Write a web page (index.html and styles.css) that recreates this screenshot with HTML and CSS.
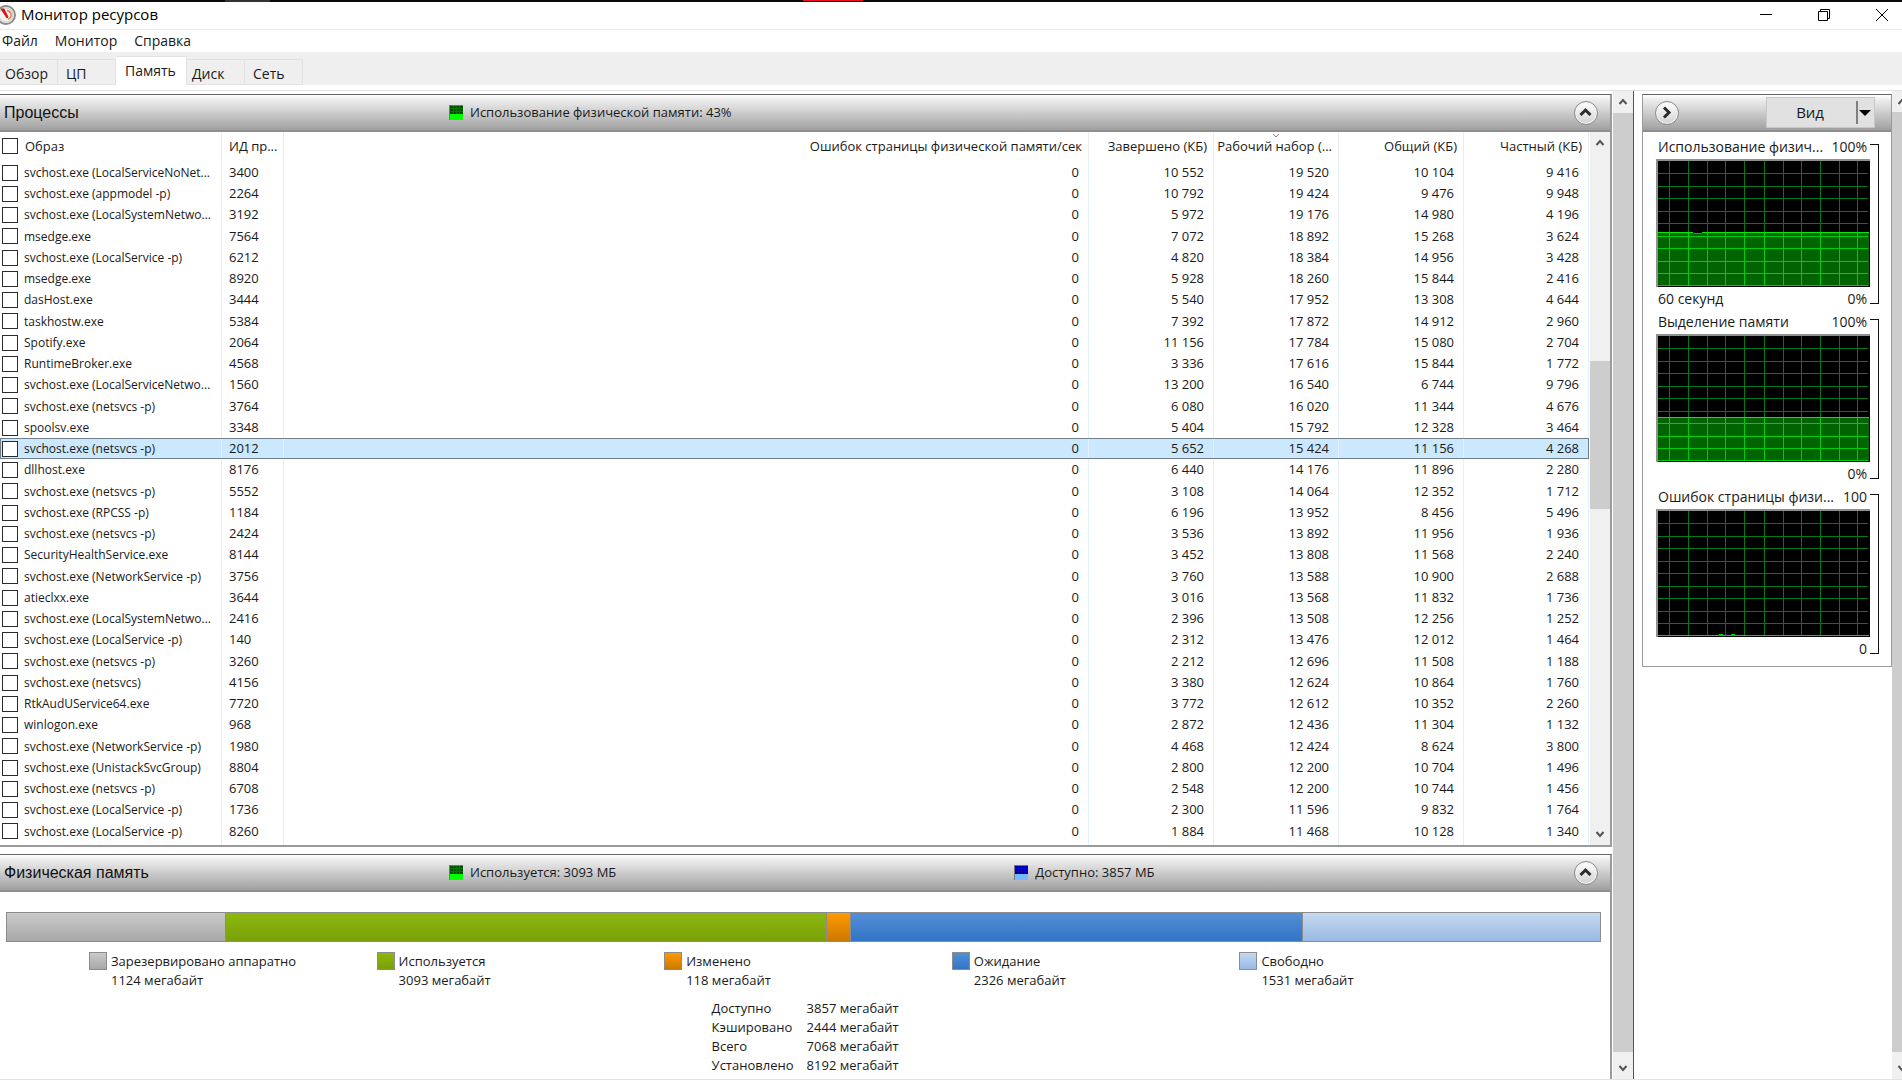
FILE: index.html
```html
<!DOCTYPE html>
<html lang="ru">
<head>
<meta charset="utf-8">
<title>Монитор ресурсов</title>
<link rel="stylesheet" href="styles.css">
</head>
<body>
<div class="desktop-edge"><span class="edge-grey"></span><span class="edge-red"></span></div>
<header class="titlebar">
  <svg class="app-icon" width="16" height="22" viewBox="0 0 16 22" aria-hidden="true">
    <circle cx="6" cy="11" r="9" fill="#f4f2f0" stroke="#8d8d8d" stroke-width="2"/>
    <circle cx="6" cy="11" r="7" fill="none" stroke="#cfcbc8"/>
    <path d="M7 6.500a4.500 4.500 0 0 1 3 7.500l-2 1.500" fill="none" stroke="#e8784a" stroke-width="1.500"/>
    <path d="M1 5l6 9 1-1-4-8z" fill="#dd1111" stroke="#dd1111"/>
  </svg>
  <h1>Монитор ресурсов</h1>
  <div class="window-buttons">
    <button type="button" aria-label="Свернуть"><svg width="14" height="14" viewBox="0 0 14 14"><path d="M1 6.500h12" stroke="#000"/></svg></button>
    <button type="button" aria-label="Восстановить"><svg width="14" height="14" viewBox="0 0 14 14"><path d="M1.500 3.500h9v9h-9zM3.500 3.500v-2h9v9h-2" fill="none" stroke="#000"/></svg></button>
    <button type="button" aria-label="Закрыть"><svg width="14" height="14" viewBox="0 0 14 14"><path d="M1 1l12 12M13 1L1 13" stroke="#000"/></svg></button>
  </div>
</header>
<nav class="menu">
  <a href="#">Файл</a><a href="#">Монитор</a><a href="#">Справка</a>
</nav>
<div class="tabs" role="tablist">
  <button type="button" role="tab">Обзор</button>
  <button type="button" role="tab">ЦП</button>
  <button type="button" role="tab" aria-selected="true" class="active">Память</button>
  <button type="button" role="tab">Диск</button>
  <button type="button" role="tab">Сеть</button>
</div>
<main class="workspace">
  <div class="panels">
    <section class="panel processes">
      <header class="panel-head">
        <h2>Процессы</h2>
        <p class="stat stat-first"><svg class="led" width="15" height="16" viewBox="0 0 15 16"><path fill="#777" d="M0 0h14v15H0z"/><path fill="#034d03" d="M1 1h13v8H1z"/><path d="M1 3.500h13M1 6.500h13M4.500 1v8M7.500 1v8M10.500 1v8" stroke="#027a02"/><path fill="#0f0" d="M1 9h13v6H1z"/></svg>Использование физической памяти: 43%</p>
        <button type="button" class="round" aria-label="Свернуть процессы"><svg width="23" height="23" viewBox="0 0 23 23"><path d="M6.500 14l5-5 5 5" fill="none" stroke="#2b2b2b" stroke-width="3"/></svg></button>
      </header>
      <div class="list">
        <table>
          <colgroup><col class="c-name"><col class="c-pid"><col><col class="c-num"><col class="c-num"><col class="c-num"><col class="c-num"></colgroup>
          <thead>
            <tr><th><label><input type="checkbox">Образ</label></th><th>ИД пр...</th><th>Ошибок страницы физической памяти/сек</th><th>Завершено (КБ)</th><th class="sorted"><svg width="8" height="5" viewBox="0 0 8 5"><path d="M1 1l3 3 3-3" fill="none" stroke="#888"/></svg>Рабочий набор (...</th><th>Общий (КБ)</th><th>Частный (КБ)</th></tr>
          </thead>
          <tbody>
            <tr><td><label><input type="checkbox">svchost.exe (LocalServiceNoNet...</label></td><td>3400</td><td>0</td><td>10 552</td><td>19 520</td><td>10 104</td><td>9 416</td></tr>
            <tr><td><label><input type="checkbox">svchost.exe (appmodel -p)</label></td><td>2264</td><td>0</td><td>10 792</td><td>19 424</td><td>9 476</td><td>9 948</td></tr>
            <tr><td><label><input type="checkbox">svchost.exe (LocalSystemNetwo...</label></td><td>3192</td><td>0</td><td>5 972</td><td>19 176</td><td>14 980</td><td>4 196</td></tr>
            <tr><td><label><input type="checkbox">msedge.exe</label></td><td>7564</td><td>0</td><td>7 072</td><td>18 892</td><td>15 268</td><td>3 624</td></tr>
            <tr><td><label><input type="checkbox">svchost.exe (LocalService -p)</label></td><td>6212</td><td>0</td><td>4 820</td><td>18 384</td><td>14 956</td><td>3 428</td></tr>
            <tr><td><label><input type="checkbox">msedge.exe</label></td><td>8920</td><td>0</td><td>5 928</td><td>18 260</td><td>15 844</td><td>2 416</td></tr>
            <tr><td><label><input type="checkbox">dasHost.exe</label></td><td>3444</td><td>0</td><td>5 540</td><td>17 952</td><td>13 308</td><td>4 644</td></tr>
            <tr><td><label><input type="checkbox">taskhostw.exe</label></td><td>5384</td><td>0</td><td>7 392</td><td>17 872</td><td>14 912</td><td>2 960</td></tr>
            <tr><td><label><input type="checkbox">Spotify.exe</label></td><td>2064</td><td>0</td><td>11 156</td><td>17 784</td><td>15 080</td><td>2 704</td></tr>
            <tr><td><label><input type="checkbox">RuntimeBroker.exe</label></td><td>4568</td><td>0</td><td>3 336</td><td>17 616</td><td>15 844</td><td>1 772</td></tr>
            <tr><td><label><input type="checkbox">svchost.exe (LocalServiceNetwo...</label></td><td>1560</td><td>0</td><td>13 200</td><td>16 540</td><td>6 744</td><td>9 796</td></tr>
            <tr><td><label><input type="checkbox">svchost.exe (netsvcs -p)</label></td><td>3764</td><td>0</td><td>6 080</td><td>16 020</td><td>11 344</td><td>4 676</td></tr>
            <tr><td><label><input type="checkbox">spoolsv.exe</label></td><td>3348</td><td>0</td><td>5 404</td><td>15 792</td><td>12 328</td><td>3 464</td></tr>
            <tr class="selected"><td><label><input type="checkbox">svchost.exe (netsvcs -p)</label></td><td>2012</td><td>0</td><td>5 652</td><td>15 424</td><td>11 156</td><td>4 268</td></tr>
            <tr><td><label><input type="checkbox">dllhost.exe</label></td><td>8176</td><td>0</td><td>6 440</td><td>14 176</td><td>11 896</td><td>2 280</td></tr>
            <tr><td><label><input type="checkbox">svchost.exe (netsvcs -p)</label></td><td>5552</td><td>0</td><td>3 108</td><td>14 064</td><td>12 352</td><td>1 712</td></tr>
            <tr><td><label><input type="checkbox">svchost.exe (RPCSS -p)</label></td><td>1184</td><td>0</td><td>6 196</td><td>13 952</td><td>8 456</td><td>5 496</td></tr>
            <tr><td><label><input type="checkbox">svchost.exe (netsvcs -p)</label></td><td>2424</td><td>0</td><td>3 536</td><td>13 892</td><td>11 956</td><td>1 936</td></tr>
            <tr><td><label><input type="checkbox">SecurityHealthService.exe</label></td><td>8144</td><td>0</td><td>3 452</td><td>13 808</td><td>11 568</td><td>2 240</td></tr>
            <tr><td><label><input type="checkbox">svchost.exe (NetworkService -p)</label></td><td>3756</td><td>0</td><td>3 760</td><td>13 588</td><td>10 900</td><td>2 688</td></tr>
            <tr><td><label><input type="checkbox">atieclxx.exe</label></td><td>3644</td><td>0</td><td>3 016</td><td>13 568</td><td>11 832</td><td>1 736</td></tr>
            <tr><td><label><input type="checkbox">svchost.exe (LocalSystemNetwo...</label></td><td>2416</td><td>0</td><td>2 396</td><td>13 508</td><td>12 256</td><td>1 252</td></tr>
            <tr><td><label><input type="checkbox">svchost.exe (LocalService -p)</label></td><td>140</td><td>0</td><td>2 312</td><td>13 476</td><td>12 012</td><td>1 464</td></tr>
            <tr><td><label><input type="checkbox">svchost.exe (netsvcs -p)</label></td><td>3260</td><td>0</td><td>2 212</td><td>12 696</td><td>11 508</td><td>1 188</td></tr>
            <tr><td><label><input type="checkbox">svchost.exe (netsvcs)</label></td><td>4156</td><td>0</td><td>3 380</td><td>12 624</td><td>10 864</td><td>1 760</td></tr>
            <tr><td><label><input type="checkbox">RtkAudUService64.exe</label></td><td>7720</td><td>0</td><td>3 772</td><td>12 612</td><td>10 352</td><td>2 260</td></tr>
            <tr><td><label><input type="checkbox">winlogon.exe</label></td><td>968</td><td>0</td><td>2 872</td><td>12 436</td><td>11 304</td><td>1 132</td></tr>
            <tr><td><label><input type="checkbox">svchost.exe (NetworkService -p)</label></td><td>1980</td><td>0</td><td>4 468</td><td>12 424</td><td>8 624</td><td>3 800</td></tr>
            <tr><td><label><input type="checkbox">svchost.exe (UnistackSvcGroup)</label></td><td>8804</td><td>0</td><td>2 800</td><td>12 200</td><td>10 704</td><td>1 496</td></tr>
            <tr><td><label><input type="checkbox">svchost.exe (netsvcs -p)</label></td><td>6708</td><td>0</td><td>2 548</td><td>12 200</td><td>10 744</td><td>1 456</td></tr>
            <tr><td><label><input type="checkbox">svchost.exe (LocalService -p)</label></td><td>1736</td><td>0</td><td>2 300</td><td>11 596</td><td>9 832</td><td>1 764</td></tr>
            <tr><td><label><input type="checkbox">svchost.exe (LocalService -p)</label></td><td>8260</td><td>0</td><td>1 884</td><td>11 468</td><td>10 128</td><td>1 340</td></tr>
            <tr><td><input type="checkbox" aria-label="Следующий процесс"></td><td></td><td></td><td></td><td></td><td></td><td></td></tr>
          </tbody>
        </table>
        <div class="scroll list-scroll">
          <svg class="arrow" width="20" height="30" viewBox="0 0 20 30"><path d="M6.500 13l3.500-4 3.500 4" fill="none" stroke="#555" stroke-width="2"/></svg>
          <span class="before"></span><span class="thumb"></span><span class="after"></span>
          <svg class="arrow" width="20" height="22" viewBox="0 0 20 22"><path d="M6.500 9l3.500 4 3.500-4" fill="none" stroke="#555" stroke-width="2"/></svg>
        </div>
      </div>
    </section>
    <section class="panel memory">
      <header class="panel-head">
        <h2>Физическая память</h2>
        <p class="stat stat-first"><svg class="led" width="15" height="16" viewBox="0 0 15 16"><path fill="#777" d="M0 0h14v15H0z"/><path fill="#034d03" d="M1 1h13v8H1z"/><path d="M1 3.500h13M1 6.500h13M4.500 1v8M7.500 1v8M10.500 1v8" stroke="#027a02"/><path fill="#0f0" d="M1 9h13v6H1z"/></svg>Используется: 3093 МБ</p>
        <p class="stat stat-second"><svg class="led" width="15" height="16" viewBox="0 0 15 16"><path fill="#777" d="M0 0h14v15H0z"/><path fill="#00008c" d="M1 1h13v8H1z"/><path d="M1 3.500h13M1 6.500h13M4.500 1v8M7.500 1v8M10.500 1v8" stroke="#0000e0"/><path fill="#73b9ff" d="M1 9h13v6H1z"/></svg>Доступно: 3857 МБ</p>
        <button type="button" class="round" aria-label="Свернуть физическую память"><svg width="23" height="23" viewBox="0 0 23 23"><path d="M6.500 14l5-5 5 5" fill="none" stroke="#2b2b2b" stroke-width="3"/></svg></button>
      </header>
      <div class="bar">
        <span class="reserved" style="flex-grow:1124"></span><span class="used" style="flex-grow:3093"></span><span class="modified" style="flex-grow:118"></span><span class="standby" style="flex-grow:2326"></span><span class="free" style="flex-grow:1531"></span>
      </div>
      <ul class="legend">
        <li><i class="reserved"></i><p>Зарезервировано аппаратно<br>1124 мегабайт</p></li>
        <li><i class="used"></i><p>Используется<br>3093 мегабайт</p></li>
        <li><i class="modified"></i><p>Изменено<br>118 мегабайт</p></li>
        <li><i class="standby"></i><p>Ожидание<br>2326 мегабайт</p></li>
        <li><i class="free"></i><p>Свободно<br>1531 мегабайт</p></li>
      </ul>
      <dl class="totals">
        <dt>Доступно</dt><dd>3857 мегабайт</dd>
        <dt>Кэшировано</dt><dd>2444 мегабайт</dd>
        <dt>Всего</dt><dd>7068 мегабайт</dd>
        <dt>Установлено</dt><dd>8192 мегабайт</dd>
      </dl>
    </section>
  </div>
  <div class="scroll page-scroll">
    <svg class="arrow" width="20" height="22" viewBox="0 0 20 22"><path d="M6.500 13l3.500-4 3.500 4" fill="none" stroke="#555" stroke-width="2"/></svg>
    <span class="thumb"></span>
    <svg class="arrow" width="20" height="27" viewBox="0 0 20 27"><path d="M6.500 14l3.500 4 3.500-4" fill="none" stroke="#555" stroke-width="2"/></svg>
  </div>
  <aside class="side">
    <section class="panel graphs">
      <header class="panel-head">
        <button type="button" class="round" aria-label="Скрыть графики"><svg width="23" height="23" viewBox="0 0 23 23"><path d="M9 6.500l5 5-5 5" fill="none" stroke="#2b2b2b" stroke-width="3"/></svg></button>
        <button type="button" class="view"><span>Вид</span><svg width="16" height="23" viewBox="0 0 16 23"><path d="M1 0v23" stroke="#808080" stroke-width="2"/><path d="M3 9h12l-6 6z" fill="#000"/></svg></button>
      </header>
      <figure>
        <figcaption><span>Использование физич...</span><span>100%</span></figcaption>
        <svg class="plot" viewBox="0 0 213 128" preserveAspectRatio="none">
          <defs>
            <path id="grid" d="M13.500 2v125M32.500 2v125M51.500 2v125M69.500 2v125M88.500 2v125M107.500 2v125M126.500 2v125M144.500 2v125M163.500 2v125M182.500 2v125M200.500 2v125M2 14.500h209M2 27.500h209M2 39.500h209M2 52.500h209M2 64.500h209M2 77.500h209M2 89.500h209M2 102.500h209M2 114.500h209M2 126.500h209"/>
            <path id="frame" d="M1 128V1h212" fill="none" stroke="#909090" stroke-width="2"/>
            <clipPath id="fill-used"><path d="M2 73h210v54H2z"/></clipPath>
            <clipPath id="fill-commit"><path d="M2 83h210v44H2z"/></clipPath>
          </defs>
          <path fill="#000" d="M0 0h213v128H0z"/>
          <use href="#grid" stroke="#007a18"/>
          <path fill="#006400" d="M2 73h210v54H2z"/>
          <use href="#grid" stroke="#00cc0c" clip-path="url(#fill-used)"/>
          <path d="M2 73.500h210" fill="none" stroke="#00ee00"/>
          <path d="M36 73h11l-2 1h-7z" fill="#000"/>
          <path d="M37 74.500h9" stroke="#00b400"/>
          <use href="#frame"/>
        </svg>
        <div class="axis"><span>60 секунд</span><span>0%</span></div>
      </figure>
      <figure>
        <figcaption><span>Выделение памяти</span><span>100%</span></figcaption>
        <svg class="plot" viewBox="0 0 213 128" preserveAspectRatio="none">
          <path fill="#000" d="M0 0h213v128H0z"/>
          <use href="#grid" stroke="#007a18"/>
          <path fill="#006400" d="M2 83h210v44H2z"/>
          <use href="#grid" stroke="#00cc0c" clip-path="url(#fill-commit)"/>
          <path d="M2 83.500h210" stroke="#00ee00"/>
          <use href="#frame"/>
        </svg>
        <div class="axis"><span></span><span>0%</span></div>
      </figure>
      <figure>
        <figcaption><span>Ошибок страницы физи...</span><span>100</span></figcaption>
        <svg class="plot" viewBox="0 0 213 128" preserveAspectRatio="none">
          <path fill="#000" d="M0 0h213v128H0z"/>
          <use href="#grid" stroke="#007a18"/>
          <path d="M2 126.500h210M63 125.500h4M75 125.500h4" fill="none" stroke="#00d800"/>
          <use href="#frame"/>
        </svg>
        <div class="axis"><span></span><span>0</span></div>
      </figure>
    </section>
  </aside>
  <div class="scroll side-scroll">
    <svg class="arrow" width="10" height="21" viewBox="0 0 10 21"><path d="M6.500 13l3.500-4 3.500 4" fill="none" stroke="#555" stroke-width="2"/></svg>
    <span class="thumb"></span>
    <svg class="arrow" width="10" height="27" viewBox="0 0 10 27"><path d="M6.500 14l3.500 4 3.500-4" fill="none" stroke="#555" stroke-width="2"/></svg>
  </div>
</main>
</body>
</html>
```

FILE: styles.css
```css
* { box-sizing: border-box; margin: 0; padding: 0; }

body {
  display: flex;
  flex-direction: column;
  height: 100vh;
  overflow: hidden;
  background: #fff;
  color: #1a1a1a;
  font: 13px/19px "Open Sans", "Noto Sans", sans-serif;
}

button { font: inherit; color: inherit; border: 0; background: none; }
svg { display: block; flex: none; }

/* Window frame */
.desktop-edge { flex: none; display: flex; height: 2px; background: #0b0909; }
.edge-grey { width: 45px; margin-left: 225px; background: #333; }
.edge-red { width: 60px; height: 1px; margin-left: 533px; background: #e81123; }

.titlebar {
  flex: none;
  display: flex;
  align-items: center;
  height: 28px;
  padding-bottom: 2px;
  border-bottom: 1px solid #e9e9e9;
}
.app-icon { margin-right: 5px; }
.titlebar h1 { font-size: 15px; font-weight: 400; color: #000; }
.window-buttons { display: flex; gap: 44px; margin-left: auto; padding-right: 13px; }

.menu { flex: none; display: flex; gap: 17px; height: 22px; padding-left: 2px; font-size: 14px; line-height: 22px; }
.menu a { color: inherit; text-decoration: none; }

.tabs {
  flex: none;
  display: flex;
  align-items: flex-end;
  height: 33px;
  background: #efefef;
  font-size: 14px;
}
.tabs button {
  flex: none;
  width: 58px;
  height: 26px;
  padding: 3px 8px 0;
  text-align: left;
  border: solid #e2e2e2;
  border-width: 1px 1px 1px 0;
}
.tabs button:first-child { padding-left: 5px; }
.tabs button:nth-child(4) { padding-left: 5px; }
.tabs .active { width: 71px; height: 29px; padding: 0 9px 1px; background: #fff; border-bottom: 0; }

/* Work area */
.workspace {
  flex: 1;
  min-height: 0;
  display: flex;
  margin-top: 5px;
  border-top: 1px solid #e3e3e3;
  border-bottom: 1px solid #e3e3e3;
}
.panels { flex: 1; min-width: 0; display: flex; flex-direction: column; gap: 7px; padding-top: 3px; }
.panel { border: 2px solid #9b9b9b; border-top: 1px solid #666; }
.processes { flex: 1; min-height: 0; display: flex; flex-direction: column; border-left: 0; }
.memory { flex: none; border-left: 0; border-bottom: 0; }

.panel-head {
  flex: none;
  position: relative;
  display: flex;
  align-items: center;
  height: 37px;
  padding: 0 12px 0 4px;
  border-bottom: 2px solid #8e8e8e;
  background: linear-gradient(#fff, #efefef 12%, #a0a0a0);
}
.panel-head h2 { font: 400 16px/20px "Liberation Sans", Arial, sans-serif; color: #111; }
.stat { position: absolute; display: flex; align-items: center; gap: 6px; }
.stat-first { left: 449px; }
.stat-second { left: 63%; }
.round {
  width: 24px;
  height: 24px;
  margin-left: auto;
  border: 1px solid #8a8a8a;
  border-radius: 50%;
  background: linear-gradient(#fff, #d2d2d2);
  box-shadow: inset 0 0 0 1px #f4f4f4;
}
.round svg { margin: -1px; }

/* Process table */
.list { flex: 1; min-height: 0; display: flex; gap: 1px; overflow: hidden; }
table { flex: 1; align-self: flex-start; width: 100%; table-layout: fixed; border-collapse: separate; border-spacing: 0; }
.c-name { width: 222px; }
.c-pid { width: 62px; }
.c-num { width: 125px; }
th, td {
  padding: 0 9px 0 0;
  border-right: 1px solid #e3f0fb;
  text-align: right;
  font-weight: 400;
  white-space: nowrap;
}
th { height: 30px; padding: 0 6px 2px 0; border-color: #ececec; }
td { height: 21px; }
tbody tr:nth-child(4n) td { height: 22px; }
th:nth-child(1) { padding: 0 0 2px 2px; text-align: left; }
td:nth-child(1) { padding: 0 0 0 2px; text-align: left; }
th:nth-child(2) { padding: 0 0 2px 7px; text-align: left; }
td:nth-child(2) { padding: 0 0 0 7px; text-align: left; }
td label, th label { display: flex; align-items: center; gap: 6px; }
td label { font-size: 12px; }
th label { gap: 7px; }
input[type="checkbox"] {
  appearance: none;
  display: block;
  flex: none;
  width: 16px;
  height: 16px;
  border: 1px solid #2b2b2b;
  background: #fff;
}
.sorted { position: relative; }
.sorted svg { position: absolute; top: 1px; left: 58px; }
.selected { outline: 1px solid #6f7f8c; outline-offset: -1px; }
.selected td { background: #cce8ff; }

/* Scroll bars */
.scroll { flex: none; display: flex; flex-direction: column; width: 20px; background: #f0f0f0; overflow: hidden; }
.thumb { flex: 1; background: #cdcdcd; }
.list-scroll .before { flex: 199; }
.list-scroll .thumb { flex: 149; }
.list-scroll .after { flex: 314; }
.page-scroll { margin-left: 1px; }
.side-scroll { width: 10px; }

/* Physical memory */
.bar { display: flex; height: 30px; margin: 20px 9px 10px 6px; border: 1px solid #8c8c8c; }
.bar span { flex-basis: 0; border-right: 1px solid #8c8c8c; }
.bar span:last-child { border-right: 0; }
.reserved { background: linear-gradient(#cacaca, #a8a8a8); }
.used { background: linear-gradient(#8db80e, #7aa00a); }
.modified { background: linear-gradient(#ff9a00, #cc7800); }
.standby { background: linear-gradient(#528fd6, #3274c6); }
.free { background: linear-gradient(#c5d9f1, #98bae5); }

.legend { display: grid; grid-template-columns: repeat(5, 1fr); padding: 0 83px 0 89px; list-style: none; }
.legend li { display: flex; gap: 4px; }
.legend i { flex: none; width: 18px; height: 18px; border: 1px solid #8c8c8c; }
.totals { display: grid; grid-template-columns: 95px auto; justify-content: start; margin: 9px 0 4px; padding-left: 44.2%; }

/* Graphs */
.side { flex: none; width: 259px; padding: 3px 0 0 8px; border-left: 1px solid #555; }
.graphs { padding-bottom: 9px; border: 1px solid #9b9b9b; border-top-color: #666; font-size: 14px; }
.graphs .panel-head { justify-content: space-between; padding: 0 16px 0 12px; }
.graphs .round { margin-left: 0; }
.view {
  display: flex;
  align-items: center;
  justify-content: flex-end;
  gap: 32px;
  width: 109px;
  height: 31px;
  padding-right: 2px;
  background: #e1e1e1;
  border: 1px solid #c8c8c8;
  font-size: 15px;
}
figure { position: relative; height: 175px; padding: 5px 21px 0 13px; }
figure::after {
  content: "";
  position: absolute;
  top: 12px;
  right: 12px;
  width: 8px;
  height: 158px;
  border: 1px solid #111;
  border-left: 0;
}
figcaption, .axis { display: flex; justify-content: space-between; height: 22px; padding: 0 3px 0 2px; line-height: 20px; white-space: nowrap; }
.axis { height: 24px; line-height: 24px; }
.plot { width: 100%; height: 128px; shape-rendering: crispEdges; }
```
